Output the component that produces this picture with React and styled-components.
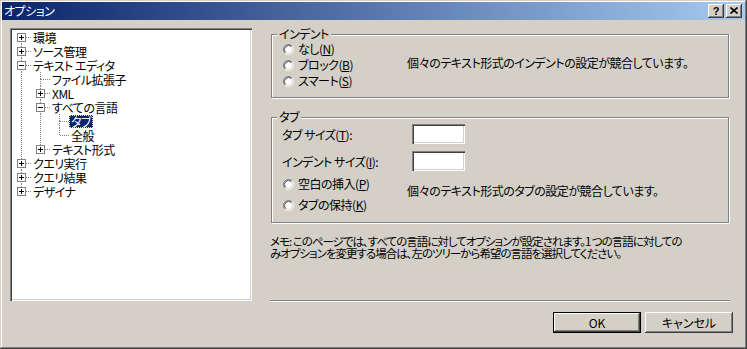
import React from 'react'
import styled, { createGlobalStyle, css } from 'styled-components'

const face = '#D4D0C8'

const GlobalStyle = createGlobalStyle`
  html, body {
    margin: 0;
    padding: 0;
    background: ${face};
  }
  body {
    font-family: "Noto Sans CJK JP", "Noto Sans", sans-serif;
    font-size: 12px;
    letter-spacing: -0.5px;
    color: #000;
    font-feature-settings: "palt" 1;
  }
`

const raised = css`
  background: ${face};
  box-shadow: inset -1px -1px 0 #404040, inset 1px 1px 0 #fff, inset -2px -2px 0 #808080;
`

const sunken = css`
  box-shadow: inset 1px 1px 0 #808080, inset 2px 2px 0 #404040, inset -1px -1px 0 #fff, inset -2px -2px 0 ${face};
`

const dotV = 'repeating-linear-gradient(to bottom, #808080 0 1px, transparent 1px 2px)'
const dotH = 'repeating-linear-gradient(to right, #808080 0 1px, transparent 1px 2px)'

const Window = styled.div`
  width: 747px;
  height: 349px;
  box-sizing: border-box;
  padding: 2px;
  background: ${face};
  box-shadow: inset -1px -1px 0 #404040, inset 1px 1px 0 ${face}, inset -2px -2px 0 #808080, inset 2px 2px 0 #fff;
  display: flex;
  flex-direction: column;
  overflow: hidden;
`

const TitleBar = styled.div`
  height: 18px;
  flex: none;
  display: flex;
  align-items: center;
  padding: 0 3px 0 2px;
  background: linear-gradient(to right, #0A246A, #A6CAF0);
`

const Title = styled.span`
  color: #fff;
  font-size: 12px;
  line-height: 18px;
`

const CaptionButtons = styled.div`
  margin-left: auto;
  display: flex;
  gap: 2px;
`

const CaptionButton = styled.div`
  ${raised};
  width: 16px;
  height: 14px;
  box-sizing: border-box;
  display: flex;
  align-items: center;
  justify-content: center;
  font-family: "Liberation Sans", Arial, sans-serif;
  font-weight: bold;
  font-size: 11px;
  letter-spacing: 0;
  line-height: 14px;
  padding-bottom: 1px;
`

const Main = styled.div`
  display: flex;
  align-items: flex-start;
  padding: 8px 0 0 8px;
  flex: none;
`

const Tree = styled.div`
  width: 242px;
  height: 273px;
  box-sizing: border-box;
  padding: 2px;
  background: #fff;
  ${sunken};
  overflow: hidden;
`

const Row = styled.div`
  display: flex;
  align-items: center;
  height: 14px;
`

const Guide = styled.span`
  flex: none;
  width: 19px;
  height: 14px;
  ${p => p.$line && css`
    background: ${dotV} 9px 0 / 1px 100% no-repeat;
  `}
`

const Connector = styled.span`
  flex: none;
  position: relative;
  width: 19px;
  height: 14px;
  background:
    ${dotH} 10px 7px / 9px 1px no-repeat,
    ${p => (p.$first ? 'none' : `${dotV} 9px 0 / 1px 7px no-repeat`)},
    ${p => (p.$last ? 'none' : `${dotV} 9px 7px / 1px 7px no-repeat`)};
`

const Expander = styled.span`
  position: absolute;
  left: 5px;
  top: 3px;
  width: 9px;
  height: 9px;
  box-sizing: border-box;
  border: 1px solid #808080;
  background: #fff;

  &::before {
    content: '';
    position: absolute;
    left: 1px;
    top: 3px;
    width: 5px;
    height: 1px;
    background: #000;
  }

  &::after {
    content: '';
    position: absolute;
    left: 3px;
    top: 1px;
    width: 1px;
    height: 5px;
    background: #000;
    display: ${p => (p.$open ? 'none' : 'block')};
  }
`

const NodeLabel = styled.span`
  padding: 0 2px;
  height: 13px;
  line-height: 13px;
  white-space: nowrap;
  ${p => p.$selected && css`
    background: #0A246A;
    color: #fff;
    outline: 1px dotted #F4EDB0;
    outline-offset: -1px;
  `}
`

const RightPane = styled.div`
  margin-left: 19px;
  width: 459px;
  display: flex;
  flex-direction: column;
  padding-top: 6px;
`

const Group = styled.div`
  position: relative;
  box-sizing: border-box;
  width: 458px;
  height: ${p => p.$h}px;
  border: 1px solid #808080;
  box-shadow: inset 1px 1px 0 #fff, 1px 1px 0 #fff;
  padding: 6px 0 0 10px;
  margin-bottom: ${p => p.$mb || 0}px;
`

const Caption = styled.span`
  position: absolute;
  top: -7px;
  left: 5px;
  padding: 0 2px;
  line-height: 12px;
  background: ${face};
`

const Split = styled.div`
  display: flex;
  align-items: flex-start;
  margin-top: ${p => p.$mt || 0}px;
`

const RadioStack = styled.div`
  width: 125px;
  flex: none;
  display: flex;
  flex-direction: column;
  gap: ${p => p.$gap || 0}px;
`

const RadioRow = styled.label`
  height: 16px;
  display: flex;
  align-items: center;
  gap: 4px;
  white-space: nowrap;
  line-height: 14px;

  svg {
    flex: none;
    margin-left: 1px;
  }
`

const Note = styled.span`
  margin-top: ${p => p.$mt}px;
  line-height: 14px;
  white-space: nowrap;
`

const SizeRow = styled.div`
  display: flex;
  align-items: center;
  height: 20px;
  margin-bottom: 7px;
`

const SizeLabel = styled.span`
  width: 130px;
  flex: none;
  white-space: nowrap;
`

const TextBox = styled.div`
  width: 53px;
  height: 20px;
  box-sizing: border-box;
  background: #fff;
  ${sunken};
`

const Memo = styled.p`
  margin: 12px 0 0 -1px;
  font-size: 11.5px;
  line-height: 12px;
  letter-spacing: -1px;
  white-space: nowrap;
`

const Separator = styled.div`
  margin: 41px 0 0 -1px;
  width: 460px;
  height: 2px;
  box-sizing: border-box;
  border-top: 1px solid #808080;
  border-bottom: 1px solid #fff;
`

const Footer = styled.div`
  display: flex;
  justify-content: flex-end;
  gap: 4px;
  padding: 10px 12px 0 0;
`

const PushButton = styled.button`
  ${raised};
  width: 88px;
  height: 21px;
  box-sizing: border-box;
  padding: 0;
  border: ${p => (p.$default ? '1px solid #000' : 'none')};
  font: inherit;
  color: #000;
  line-height: 17px;
`

const RadioIcon = () => (
  <svg width="11" height="11" viewBox="0 0 12 12">
    <circle cx="6" cy="6" r="4.5" fill="#fff" />
    <path d="M2.11 9.89A5.5 5.5 0 0 1 9.89 2.11" fill="none" stroke="#808080" />
    <path d="M9.89 2.11A5.5 5.5 0 0 1 2.11 9.89" fill="none" stroke="#fff" />
    <path d="M2.82 9.18A4.5 4.5 0 0 1 9.18 2.82" fill="none" stroke="#404040" />
    <path d="M9.18 2.82A4.5 4.5 0 0 1 2.82 9.18" fill="none" stroke={face} />
  </svg>
)

const CloseIcon = () => (
  <svg width="8" height="7" viewBox="0 0 8 7">
    <path d="M0.5 0.5L7.5 6.5M7.5 0.5L0.5 6.5" stroke="#000" strokeWidth="1.6" />
  </svg>
)

const nodes = [
  { label: '環境', guides: [], box: 'plus', first: true },
  { label: 'ソース管理', guides: [], box: 'plus' },
  { label: 'テキスト エディタ', guides: [], box: 'minus' },
  { label: 'ファイル拡張子', guides: [true] },
  { label: 'XML', guides: [true], box: 'plus' },
  { label: 'すべての言語', guides: [true], box: 'minus' },
  { label: 'タブ', guides: [true, true], selected: true },
  { label: '全般', guides: [true, true], last: true },
  { label: 'テキスト形式', guides: [true], box: 'plus', last: true },
  { label: 'クエリ実行', guides: [], box: 'plus' },
  { label: 'クエリ結果', guides: [], box: 'plus' },
  { label: 'デザイナ', guides: [], box: 'plus', last: true },
]

const Radio = ({ children }) => (
  <RadioRow>
    <RadioIcon />
    <span>{children}</span>
  </RadioRow>
)

export default function App() {
  return (
    <>
      <GlobalStyle />
      <Window>
        <TitleBar>
          <Title>オプション</Title>
          <CaptionButtons>
            <CaptionButton>?</CaptionButton>
            <CaptionButton><CloseIcon /></CaptionButton>
          </CaptionButtons>
        </TitleBar>

        <Main>
          <Tree>
            {nodes.map(n => (
              <Row key={n.label}>
                {n.guides.map((g, i) => <Guide key={i} $line={g} />)}
                <Connector $first={n.first} $last={n.last}>
                  {n.box && <Expander $open={n.box === 'minus'} />}
                </Connector>
                <NodeLabel $selected={n.selected}>{n.label}</NodeLabel>
              </Row>
            ))}
          </Tree>

          <RightPane>
            <Group $h={64} $mb={19}>
              <Caption>インデント</Caption>
              <Split>
                <RadioStack>
                  <Radio>なし(<u>N</u>)</Radio>
                  <Radio>ブロック(<u>B</u>)</Radio>
                  <Radio>スマート(<u>S</u>)</Radio>
                </RadioStack>
                <Note $mt={15}>個々のテキスト形式のインデントの設定が競合しています。</Note>
              </Split>
            </Group>

            <Group $h={106}>
              <Caption>タブ</Caption>
              <SizeRow>
                <SizeLabel>タブ サイズ(<u>T</u>):</SizeLabel>
                <TextBox />
              </SizeRow>
              <SizeRow>
                <SizeLabel>インデント サイズ(<u>I</u>):</SizeLabel>
                <TextBox />
              </SizeRow>
              <Split $mt={-2}>
                <RadioStack $gap={5}>
                  <Radio>空白の挿入(<u>P</u>)</Radio>
                  <Radio>タブの保持(<u>K</u>)</Radio>
                </RadioStack>
                <Note $mt={8}>個々のテキスト形式のタブの設定が競合しています。</Note>
              </Split>
            </Group>

            <Memo>
              メモ: このページでは、すべての言語に対してオプションが設定されます。1 つの言語に対しての
              <br />
              みオプションを変更する場合は、左のツリーから希望の言語を選択してください。
            </Memo>

            <Separator />
          </RightPane>
        </Main>

        <Footer>
          <PushButton $default>OK</PushButton>
          <PushButton>キャンセル</PushButton>
        </Footer>
      </Window>
    </>
  )
}
